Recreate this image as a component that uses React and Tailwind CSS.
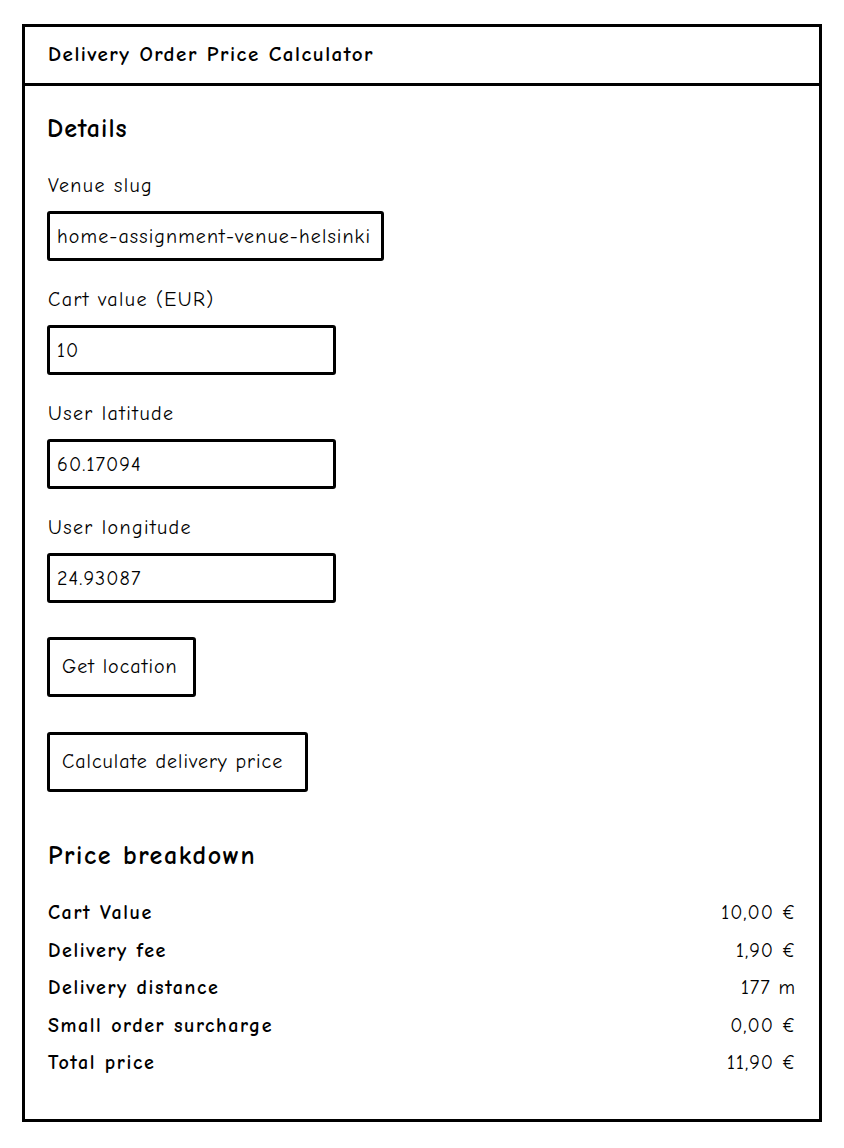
const fields = [
  { label: "Venue slug", value: "home-assignment-venue-helsinki", width: "w-[337px]" },
  { label: "Cart value (EUR)", value: "10", width: "w-[289px]" },
  { label: "User latitude", value: "60.17094", width: "w-[289px]" },
  { label: "User longitude", value: "24.93087", width: "w-[289px]" },
];

const rows = [
  { name: "Cart Value", value: "10,00 €" },
  { name: "Delivery fee", value: "1,90 €" },
  { name: "Delivery distance", value: "177 m" },
  { name: "Small order surcharge", value: "0,00 €" },
  { name: "Total price", value: "11,90 €" },
];

export default function App() {
  return (
    <div
      className="w-full min-h-screen bg-white text-black pt-[24px]"
      style={{ fontFamily: '"Comic Sans MS", "Comic Neue", "DejaVu Sans", sans-serif' }}
    >
      <div className="mx-auto w-[800px] h-[1098px] border-[3px] border-black flex flex-col">
        <div className="h-[59px] border-b-[3px] border-black flex items-center px-[23px]">
          <span className="text-[21px] font-bold tracking-[1.5px]">Delivery Order Price Calculator</span>
        </div>

        <div className="flex flex-col px-[22px] pt-[27px]">
          <h2 className="text-[26px] leading-[32px] font-bold tracking-[1px] mb-[27px]">Details</h2>

          <div className="flex flex-col gap-[25px]">
            {fields.map((f) => (
              <div key={f.label} className="flex flex-col">
                <label className="text-[20px] leading-[27px] tracking-[1.4px] pl-[1px] mb-[12px]">{f.label}</label>
                <input
                  readOnly
                  value={f.value}
                  className={`${f.width} h-[50px] border-[3px] border-black rounded-[3px] pl-[7px] pr-[4px] text-[20px] tracking-[1.1px] outline-none`}
                />
              </div>
            ))}
          </div>

          <button className="mt-[34px] w-[149px] h-[60px] border-[3px] border-black rounded-[3px] text-[20px] tracking-[1px] text-left px-[12px]">
            Get location
          </button>
          <button className="mt-[35px] w-[261px] h-[60px] border-[3px] border-black rounded-[3px] text-[20px] tracking-[1px] text-left px-[12px]">
            Calculate delivery price
          </button>

          <h2 className="mt-[48px] text-[26px] leading-[32px] font-bold tracking-[1.6px] pl-[1px]">Price breakdown</h2>

          <div className="mt-[27px] flex flex-col gap-[10.5px]">
            {rows.map((r) => (
              <div key={r.name} className="flex justify-between items-center text-[20px] leading-[27px] pl-[1px] pr-[1px]">
                <span className="font-bold tracking-[1.6px]">{r.name}</span>
                <span className="tracking-[1px]">{r.value}</span>
              </div>
            ))}
          </div>
        </div>
      </div>
    </div>
  );
}
